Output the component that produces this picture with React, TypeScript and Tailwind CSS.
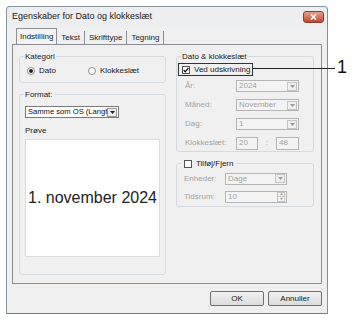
import type { ReactNode } from "react";

function Radio({ checked, label }: { checked?: boolean; label: string }) {
  return (
    <div className="flex items-center gap-[4px]">
      <span className="flex h-[8px] w-[8px] items-center justify-center rounded-full border border-[#8f8f8f] bg-white">
        {checked ? <span className="h-[4px] w-[4px] rounded-full bg-[#222]" /> : null}
      </span>
      <span>{label}</span>
    </div>
  );
}

function CheckBox({ checked }: { checked?: boolean }) {
  return (
    <span className="flex h-[8px] w-[8px] items-center justify-center border border-[#555] bg-white">
      {checked ? (
        <svg width="6" height="6" viewBox="0 0 6 6">
          <path d="M0.6 3 L2.3 4.8 L5.4 0.8" stroke="#111" strokeWidth="1.3" fill="none" />
        </svg>
      ) : null}
    </span>
  );
}

function Arrow() {
  return (
    <span className="flex h-[9px] w-[10px] items-center justify-center border border-[#c4c4c4] bg-[#f0f0f0]">
      <svg width="5" height="3" viewBox="0 0 5 3">
        <path d="M0 0 H5 L2.5 3 Z" fill="#9a9a9a" />
      </svg>
    </span>
  );
}

function Combo({ value, width }: { value: string; width: string }) {
  return (
    <div className={`flex h-[12px] items-center justify-between border border-[#b5b5b5] bg-[#f4f4f4] pr-[1px] ${width}`}>
      <span className="pl-[2px] text-[#a3a3a3]">{value}</span>
      <Arrow />
    </div>
  );
}

function Group({ legend, className, children }: { legend: ReactNode; className: string; children: ReactNode }) {
  return (
    <fieldset className={`rounded-[3px] border border-[#d5dadf] ${className}`}>
      <legend className="ml-[4px] px-[1px] leading-[9px]">{legend}</legend>
      {children}
    </fieldset>
  );
}

function Row({ label, children }: { label: string; children: ReactNode }) {
  return (
    <div className="flex h-[12px] items-center">
      <span className="w-[51px] text-[#a3a3a3]">{label}</span>
      {children}
    </div>
  );
}

export default function App() {
  return (
    <div className="relative h-[319px] w-[360px] overflow-hidden bg-white font-['Liberation_Sans',Arial,sans-serif] text-[8px] text-[#1a1a1a]">
      <div className="ml-[6px] mt-[6px] flex h-[308px] w-[322px] flex-col rounded-t-[4px] border border-[#8b959e] border-b-[#3d8db4] border-r-[#5b9cc2] bg-[#eceef0]">
        {/* title bar */}
        <div className="flex h-[20px] items-center pl-[5px] pr-[3px]">
          <span className="text-[9px] text-[#222]">Egenskaber for Dato og klokkeslæt</span>
          <span className="ml-auto flex h-[12px] w-[21px] items-center justify-center rounded-[3px] border border-[#8d3b2f] bg-gradient-to-b from-[#e8a190] to-[#c5432d]">
            <svg width="7" height="6" viewBox="0 0 7 6">
              <path d="M1 0.5 L6 5.5 M6 0.5 L1 5.5" stroke="white" strokeWidth="1.6" />
            </svg>
          </span>
        </div>

        <div className="flex flex-1 flex-col bg-[#f0f0f0] pl-[5px] pr-[5px]">
          {/* tabs */}
          <div className="flex h-[17px] items-end pl-[4px]">
            <div className="flex h-[16px] items-center border border-b-0 border-[#8c9096] bg-[#f4f4f4] px-[3px]">Indstilling</div>
            <div className="flex h-[13px] items-center border-r border-[#8c9096] px-[4px]">Tekst</div>
            <div className="flex h-[13px] items-center border-r border-[#8c9096] px-[4px]">Skrifttype</div>
            <div className="flex h-[13px] items-center border-r border-[#8c9096] px-[4px]">Tegning</div>
          </div>

          {/* panel */}
          <div className="flex h-[240px] gap-[10px] border border-[#8c9096] pl-[6px] pt-[7px]">
            <div className="flex w-[147px] flex-col gap-[7px]">
              <Group legend="Kategori" className="h-[31px]">
                <div className="flex h-[18px] items-center gap-[32px] pl-[7px] pt-[1px]">
                  <Radio checked label="Dato" />
                  <Radio label="Klokkeslæt" />
                </div>
              </Group>
              <Group legend="Format:" className="h-[185px]">
                <div className="flex flex-col pl-[5px] pt-[7px]">
                  <div className="flex h-[12px] w-[94px] items-center border border-[#7a7a7a] bg-white pr-[1px]">
                    <span className="flex-1 overflow-hidden whitespace-nowrap pl-[2px] text-[7.6px] text-[#111]">Samme som OS (Langt dato</span>
                    <span className="flex h-[9px] w-[10px] items-center justify-center border border-[#9a9a9a] bg-[#ececec]">
                      <svg width="5" height="3" viewBox="0 0 5 3">
                        <path d="M0 0 H5 L2.5 3 Z" fill="#222" />
                      </svg>
                    </span>
                  </div>
                  <span className="mt-[8px] leading-[10px]">Prøve</span>
                  <div className="mt-[3px] flex h-[118px] w-[135px] items-center justify-center border border-[#dcdcdc] bg-white">
                    <span className="whitespace-nowrap text-[16px] text-[#222]">1. november 2024</span>
                  </div>
                </div>
              </Group>
            </div>

            <div className="flex w-[138px] flex-col gap-[7px]">
              <Group legend="Dato & klokkeslæt" className="h-[100px]">
                <div className="flex flex-col pl-[1px] pt-[2px]">
                  <div className="flex h-[13px] w-[75px] items-center gap-[4px] border border-[#333] pl-[3px]">
                    <CheckBox checked />
                    <span>Ved udskrivning</span>
                  </div>
                  <div className="mt-[4px] flex flex-col gap-[7px] pl-[7px]">
                    <Row label="År:">
                      <Combo value="2024" width="w-[63px]" />
                    </Row>
                    <Row label="Måned:">
                      <Combo value="November" width="w-[63px]" />
                    </Row>
                    <Row label="Dag:">
                      <Combo value="1" width="w-[63px]" />
                    </Row>
                    <Row label="Klokkeslæt:">
                      <div className="flex items-center">
                        <span className="flex h-[13px] w-[22px] items-center border border-[#b5b5b5] bg-[#f4f4f4] pl-[2px] text-[#a3a3a3]">20</span>
                        <span className="w-[18px] text-center text-[#a3a3a3]">:</span>
                        <span className="flex h-[13px] w-[23px] items-center border border-[#b5b5b5] bg-[#f4f4f4] pl-[2px] text-[#a3a3a3]">48</span>
                      </div>
                    </Row>
                  </div>
                </div>
              </Group>
              <Group
                legend={
                  <span className="flex items-center gap-[4px] pl-[2px] pr-[2px]">
                    <CheckBox />
                    <span>Tilføj/Fjern</span>
                  </span>
                }
                className="h-[48px]"
              >
                <div className="flex flex-col gap-[5px] pl-[7px] pt-[4px]">
                  <div className="flex h-[13px] items-center">
                    <span className="w-[41px] text-[#a3a3a3]">Enheder:</span>
                    <Combo value="Dage" width="w-[62px]" />
                  </div>
                  <div className="flex h-[13px] items-center">
                    <span className="w-[41px] text-[#a3a3a3]">Tidsrum:</span>
                    <div className="flex h-[12px] w-[62px] items-center justify-between border border-[#b5b5b5] bg-[#f4f4f4] pr-[1px]">
                      <span className="pl-[2px] text-[#a3a3a3]">10</span>
                      <span className="flex h-[10px] w-[8px] flex-col">
                        <span className="flex flex-1 items-center justify-center border border-[#c4c4c4]">
                          <svg width="3" height="2" viewBox="0 0 3 2"><path d="M0 2 H3 L1.5 0 Z" fill="#a0a0a0" /></svg>
                        </span>
                        <span className="flex flex-1 items-center justify-center border border-t-0 border-[#c4c4c4]">
                          <svg width="3" height="2" viewBox="0 0 3 2"><path d="M0 0 H3 L1.5 2 Z" fill="#a0a0a0" /></svg>
                        </span>
                      </span>
                    </div>
                  </div>
                </div>
              </Group>
            </div>
          </div>

          {/* buttons */}
          <div className="mt-[7px] flex justify-end gap-[4px]">
            <button type="button" className="flex h-[15px] w-[54px] items-center justify-center rounded-[2px] border border-[#707070] bg-gradient-to-b from-[#f2f2f2] to-[#dcdcdc]">
              OK
            </button>
            <button type="button" className="flex h-[15px] w-[54px] items-center justify-center rounded-[2px] border border-[#707070] bg-gradient-to-b from-[#f2f2f2] to-[#dcdcdc]">
              Annuller
            </button>
          </div>
        </div>
      </div>

      {/* callout */}
      <div className="absolute left-[253px] top-[68px] h-[1px] w-[82px] bg-[#222]" />
      <span className="absolute left-[337px] top-[57px] text-[18px] leading-[20px] text-[#111]">1</span>
    </div>
  );
}
